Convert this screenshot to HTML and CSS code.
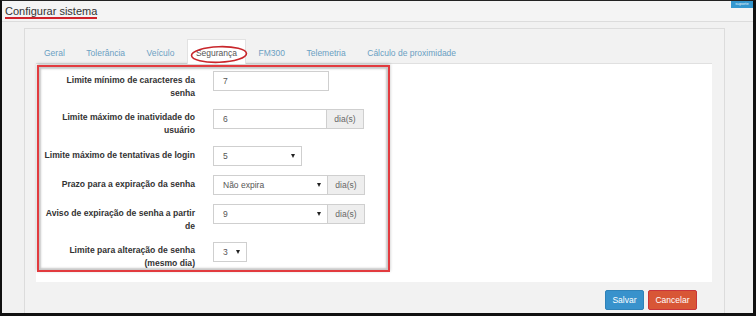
FILE: index.html
```html
<!DOCTYPE html>
<html lang="pt">
<head>
<meta charset="utf-8">
<title>Configurar sistema</title>
<link rel="stylesheet" href="styles.css">
</head>
<body>
<div class="frame">
  <div class="badge">suporte</div>
  <header class="page-header">
    <h1 class="title">Configurar sistema</h1>
  </header>
  <section class="panel">
    <ul class="tabs">
      <li class="tab">Geral</li>
      <li class="tab">Tolerância</li>
      <li class="tab">Veículo</li>
      <li class="tab active">Segurança
        <svg class="circle-mark" width="58" height="19" viewBox="0 0 58 19"><ellipse cx="29" cy="9.5" rx="27.5" ry="7.8" fill="none" stroke="#c8262b" stroke-width="1.6" transform="rotate(-2 29 9.5)"/></svg>
      </li>
      <li class="tab">FM300</li>
      <li class="tab">Telemetria</li>
      <li class="tab">Cálculo de proximidade</li>
    </ul>
    <div class="pane">
      <div class="form-box">
        <div class="row">
          <label class="lbl">Limite mínimo de caracteres da senha</label>
          <div class="ctl"><div class="input w116">7</div></div>
        </div>
        <div class="row">
          <label class="lbl">Limite máximo de inatividade do usuário</label>
          <div class="ctl"><div class="input w114">6</div><div class="addon">dia(s)</div></div>
        </div>
        <div class="row">
          <label class="lbl">Limite máximo de tentativas de login</label>
          <div class="ctl"><div class="input select w89"><span>5</span><span class="caret"></span></div></div>
        </div>
        <div class="row">
          <label class="lbl">Prazo para a expiração da senha</label>
          <div class="ctl"><div class="input select w115"><span>Não expira</span><span class="caret"></span></div><div class="addon">dia(s)</div></div>
        </div>
        <div class="row">
          <label class="lbl">Aviso de expiração de senha a partir de</label>
          <div class="ctl"><div class="input select w115"><span>9</span><span class="caret"></span></div><div class="addon">dia(s)</div></div>
        </div>
        <div class="row last">
          <label class="lbl">Limite para alteração de senha (mesmo dia)</label>
          <div class="ctl"><div class="input select w34"><span>3</span><span class="caret"></span></div></div>
        </div>
      </div>
    </div>
    <div class="actions">
      <button class="btn btn-save">Salvar</button>
      <button class="btn btn-cancel">Cancelar</button>
    </div>
  </section>
</div>
</body>
</html>
```

FILE: styles.css
```css
* { box-sizing: border-box; }
html, body { margin: 0; padding: 0; }
body {
  font-family: "Liberation Sans", Arial, sans-serif;
  background: #fff;
  width: 756px;
  height: 316px;
  overflow: hidden;
}
.frame {
  position: relative;
  width: 756px;
  height: 316px;
  border-left: 2px solid #111;
  border-top: 1px solid #222;
  border-right: 3px solid #111;
  border-bottom: 3px solid #111;
  background: #f1f1f1;
  overflow: hidden;
}
.badge {
  position: absolute;
  right: 0;
  top: 0;
  width: 22px;
  height: 7px;
  background: #3497cf;
  color: #e8f4fb;
  font-size: 4px;
  line-height: 6px;
  text-align: center;
  overflow: hidden;
}
.page-header {
  height: 21px;
  padding: 0 3px;
  border-bottom: 1px solid #dcdcdc;
  background: #f4f4f4;
}
.title {
  display: inline-block;
  margin: 0;
  padding-top: 3px;
  font-size: 11px;
  font-weight: normal;
  color: #333;
  line-height: 12px;
  border-bottom: 2px solid #d0232a;
}
.panel {
  margin: 6px 28px 0 22px;
  height: 300px;
  border: 1px solid #dcdcdc;
  background: #f2f2f2;
  padding: 10px 12px 0 11px;
}
.tabs {
  list-style: none;
  margin: 0;
  padding: 0;
  display: flex;
  height: 24px;
}
.tab {
  position: relative;
  padding: 1px 8px 0 8px;
  margin-right: 3.5px;
  font-size: 8.5px;
  line-height: 24px;
  color: #6aa0c2;
  border: 1px solid transparent;
  border-bottom: none;
}
.tab:first-child { margin-left: -1px; }
.tab.active {
  background: #fff;
  color: #555;
  border-color: #e2e2e2;
  height: 25px;
}
.circle-mark {
  position: absolute;
  left: 2px;
  top: 5px;
}
.pane {
  background: #fff;
  border-top: 1px solid #e0e0e0;
  padding: 1px 0 10px 1px;
}
.form-box {
  width: 353px;
  border: 2px solid #e23b3f;
  padding: 4px 0 0 4px;
  box-shadow: inset 0 0 2px 2px rgba(0,0,0,0.22), 0 -1px 3px rgba(0,0,0,0.25);
  background: #fff;
}
.row {
  display: grid;
  grid-template-columns: 152px auto;
  column-gap: 18px;
  margin-bottom: 9px;
  align-items: start;
}
.row.last { margin-bottom: 0; }
.lbl {
  text-align: right;
  font-size: 8.6px;
  font-weight: bold;
  color: #333;
  line-height: 13px;
  padding-top: 2.5px;
}
.ctl {
  display: flex;
}
.input {
  height: 20px;
  border: 1px solid #cfcfcf;
  background: #fff;
  font-size: 8.5px;
  color: #555;
  line-height: 18px;
  padding-left: 9px;
}
.select {
  display: flex;
  justify-content: space-between;
  align-items: center;
  padding-right: 6px;
}
.caret {
  width: 0;
  height: 0;
  border-top: 4px solid #222;
  border-left: 2.5px solid transparent;
  border-right: 2.5px solid transparent;
}
.w116 { width: 116px; }
.w114 { width: 114px; }
.w115 { width: 115px; }
.w89 { width: 89px; }
.w34 { width: 34px; }
.addon {
  width: 37px;
  height: 20px;
  border: 1px solid #cfcfcf;
  border-left: none;
  background: #eee;
  color: #666;
  font-size: 8.5px;
  line-height: 18px;
  text-align: center;
}
.actions {
  display: flex;
  justify-content: flex-end;
  gap: 4px;
  padding-right: 15px;
  margin-top: 8px;
}
.btn {
  height: 20px;
  padding: 0;
  font-family: "Liberation Sans", Arial, sans-serif;
  font-size: 8.5px;
  color: #fff;
  border-radius: 2px;
  cursor: pointer;
}
.btn-save {
  width: 39px;
  background: #3892cc;
  border: 1px solid #2f82b8;
}
.btn-cancel {
  width: 49px;
  background: #d85636;
  border: 1px solid #c9343a;
}
```
